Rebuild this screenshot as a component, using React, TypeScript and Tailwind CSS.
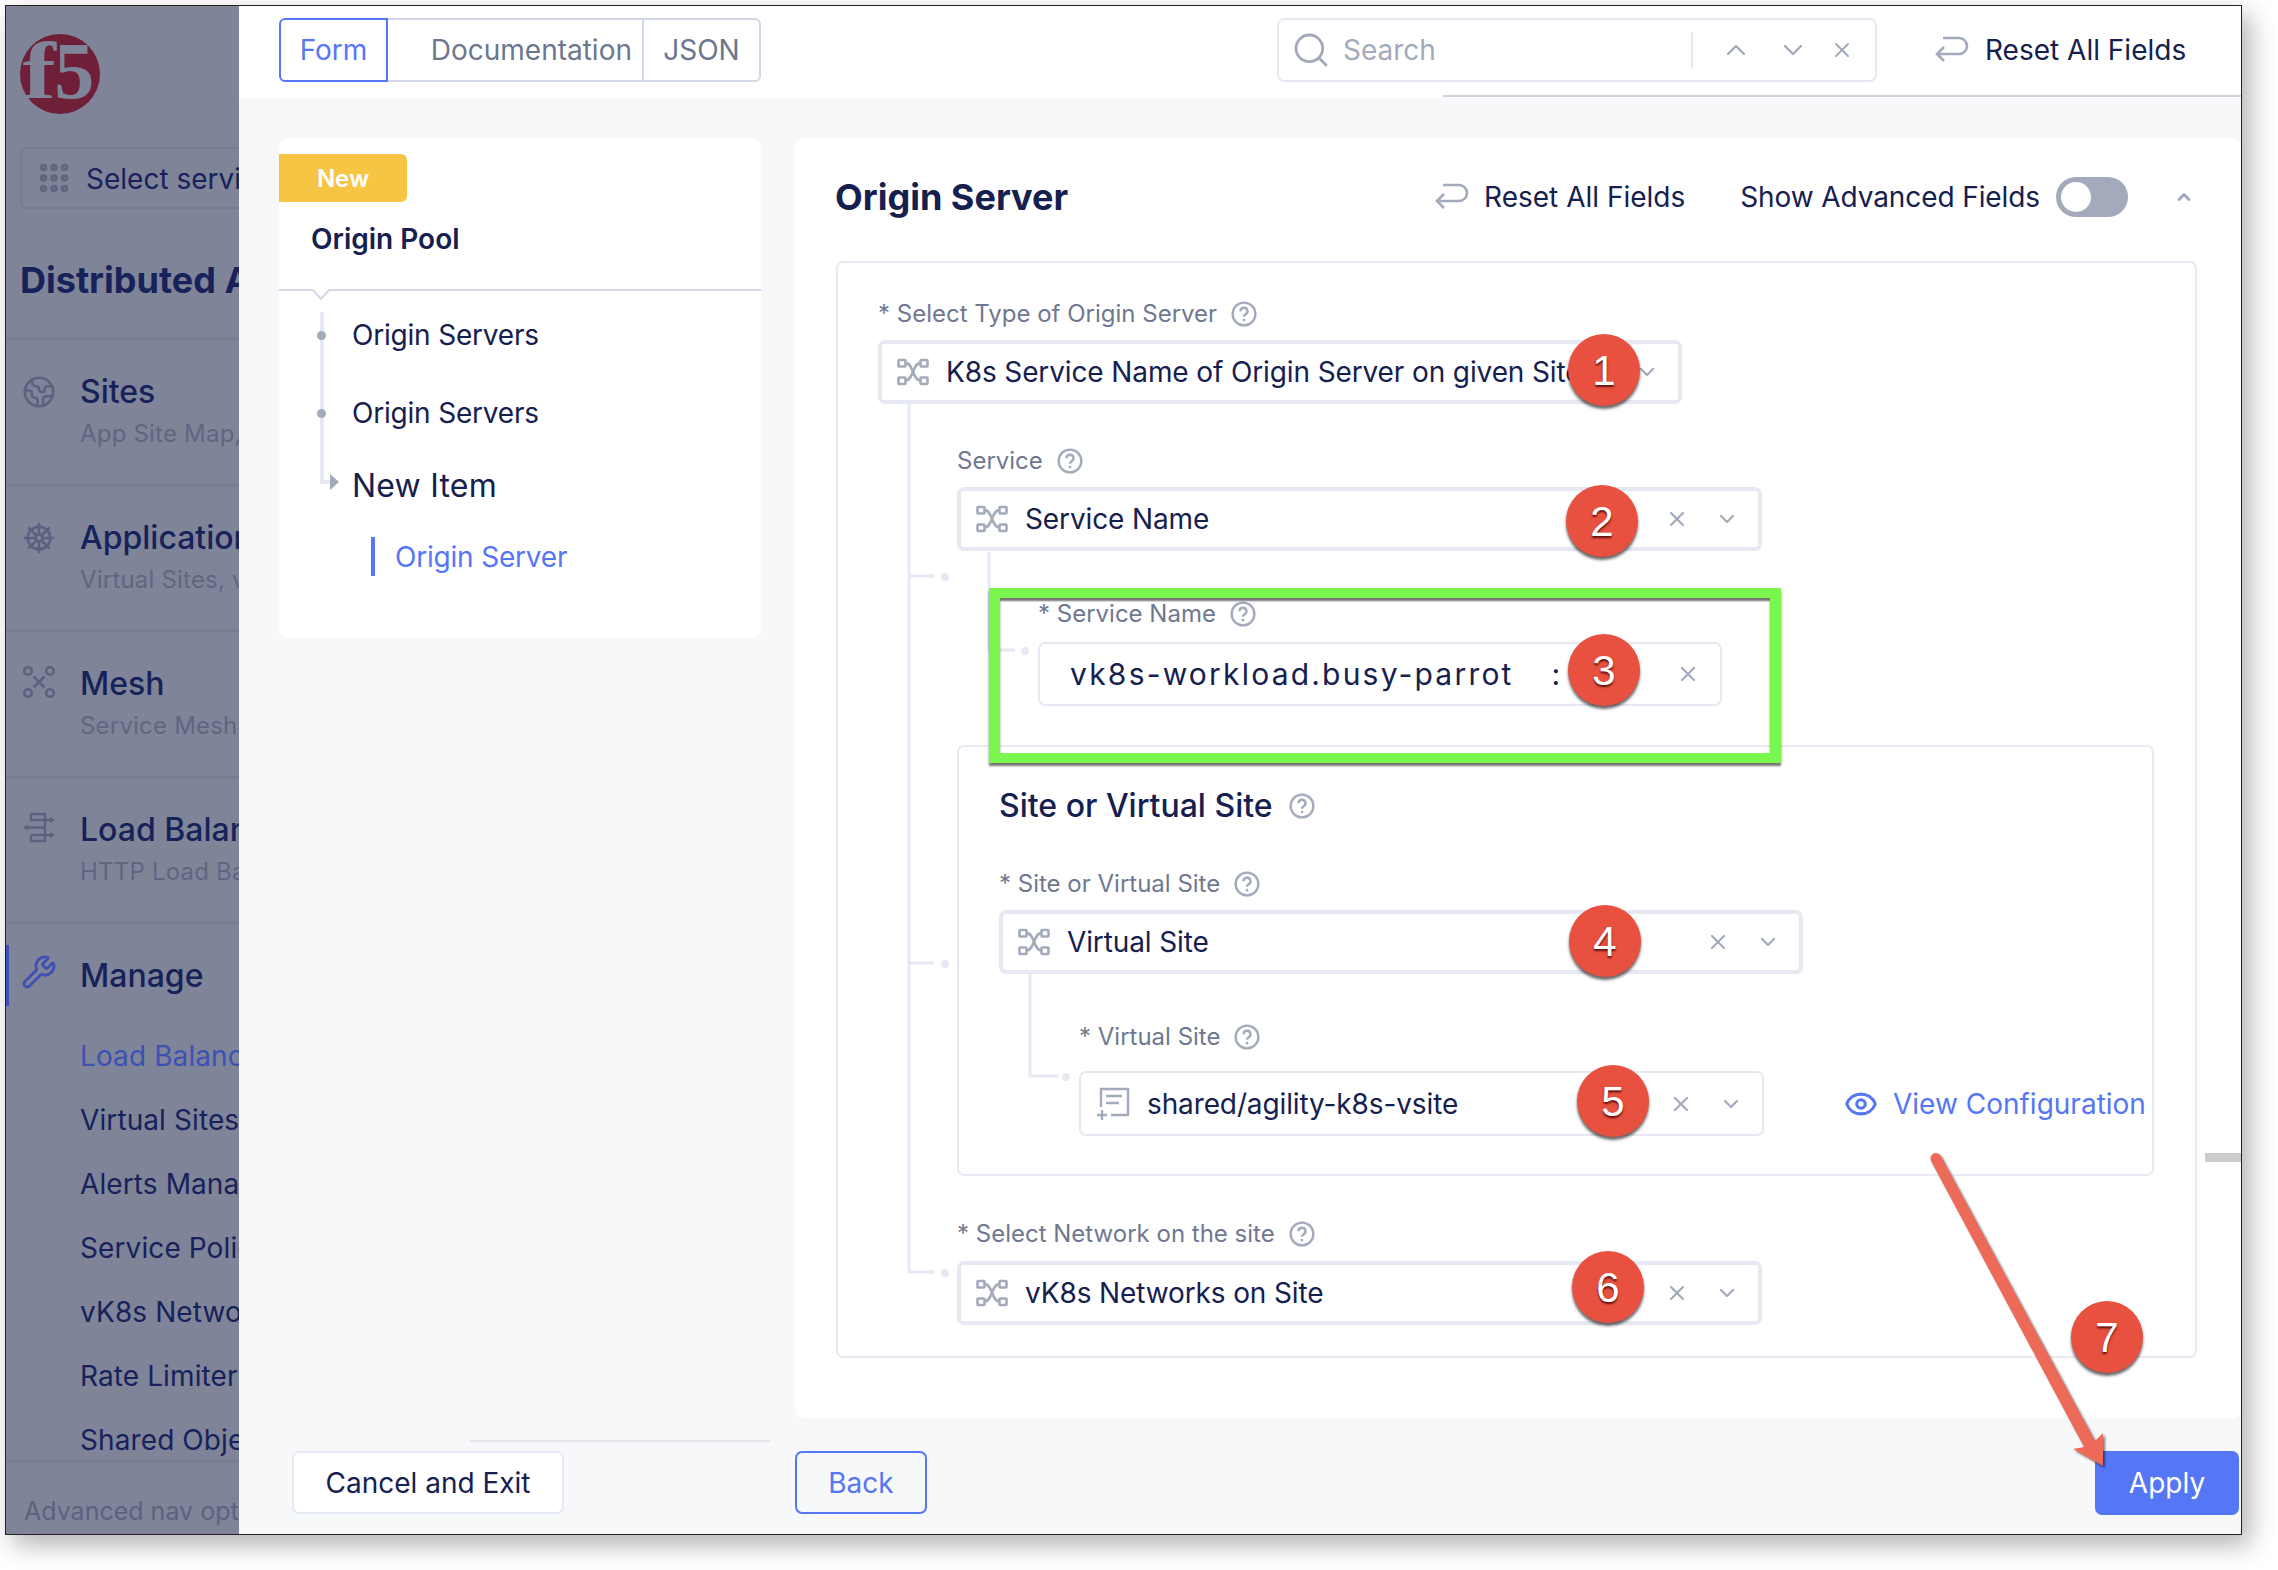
import { ChevronDown, ChevronUp, Earth, Eye, Grip, Search, ShipWheel, Wrench, X } from "lucide-react";

const NodeIcon = () => (
  <svg width="32" height="28" viewBox="0 0 32 28" fill="none" stroke="#a3aabb" strokeWidth="2.6" className="shrink-0">
    <rect x="1.5" y="2" width="7" height="6.5" rx="0.8" />
    <rect x="23.5" y="2" width="7" height="6.5" rx="0.8" />
    <rect x="1.5" y="19.5" width="7" height="6.5" rx="0.8" />
    <rect x="23.5" y="19.5" width="7" height="6.5" rx="0.8" />
    <path d="M8.5 5c8 0 7 17.500 15 17.500M8.500 22.500c8 0 7-17.500 15-17.500" />
  </svg>
);

const DocIcon = () => (
  <svg width="34" height="34" viewBox="0 0 34 34" fill="none" stroke="#a3aabb" strokeWidth="2.4" className="shrink-0">
    <path d="M5 20V2h27v26H15M10 9h16M10 16h13M6 23v10M1 28h10" />
  </svg>
);

const ResetIcon = () => (
  <svg width="34" height="28" viewBox="0 0 34 28" fill="none" stroke="#a3aabb" strokeWidth="2.6" className="shrink-0">
    <path d="M8 2H24a8 8 0 0 1 0 16H2M9 11l-7 7 7 7" />
  </svg>
);

const Help = ({ size = 26 }: { size?: number }) => (
  <svg width={size} height={size} viewBox="0 0 24 24" fill="none" className="shrink-0">
    <circle cx="12" cy="12" r="10.5" stroke="#a3aabb" strokeWidth="2.2" />
    <path d="M8.800 9.400a3.200 3.200 0 1 1 4.600 2.900c-1 .5-1.400 1.100-1.400 2.200" stroke="#a3aabb" strokeWidth="2.2" />
    <circle cx="12" cy="17.600" r="1.300" fill="#a3aabb" />
  </svg>
);

const Label = ({ text, className = "" }: { text: string; className?: string }) => (
  <div className={`h-[34px] flex items-center gap-[14px] text-[24px] text-[#6f7890] ${className}`}>
    <span>{text}</span>
    <Help />
  </div>
);

type SelectProps = {
  value: string;
  width: string;
  thin?: boolean;
  icon?: "node" | "doc" | "none";
  clear?: boolean;
  chevron?: boolean;
};

const Select = ({ value, width, thin, icon = "node", clear = true, chevron = true }: SelectProps) => (
  <div
    className={`${width} ${thin ? "h-[65px] border-2" : "h-[64px] border-4"} box-border shrink-0 border-[#e6e9f3] rounded-[7px] bg-white flex items-center pl-[15px] pr-[19px]`}
  >
    {icon === "node" && <NodeIcon />}
    {icon === "doc" && <DocIcon />}
    <span className="ml-[17px] text-[28px] tracking-[-0.12px] text-[#16204f] whitespace-nowrap overflow-hidden">{value}</span>
    <div className="ml-auto flex items-center gap-[26px] text-[#a3aabb]">
      {clear && <X size={24} strokeWidth={2.2} />}
      {chevron && <ChevronDown size={24} strokeWidth={2.2} />}
    </div>
  </div>
);

const navMain = [
  { title: "Sites", sub: "App Site Map, Sites", icon: <Earth size={36} strokeWidth={1.8} /> },
  { title: "Applications", sub: "Virtual Sites, vK8s", icon: <ShipWheel size={36} strokeWidth={1.8} /> },
  {
    title: "Mesh",
    sub: "Service Mesh",
    icon: (
      <svg width="32" height="32" viewBox="0 0 32 32" fill="none" stroke="currentColor" strokeWidth="2.600">
        <circle cx="5" cy="5" r="3.800" />
        <circle cx="27" cy="5" r="3.800" />
        <circle cx="5" cy="27" r="3.800" />
        <circle cx="27" cy="27" r="3.800" />
        <path d="M10.500 10.500l11 11M21.500 10.500l-11 11" />
      </svg>
    ),
  },
  {
    title: "Load Balancers",
    sub: "HTTP Load Balancers",
    icon: (
      <svg width="34" height="32" viewBox="0 0 34 32" fill="none" stroke="currentColor" strokeWidth="2.400">
        <path d="M24 2H9v6h20M6 15.500h18M9 23h20M9 23v6h15M23 2v27" />
        <path d="M33 8l-5-3v6zM1 15.500l5-3v6zM33 23l-5-3v6z" fill="currentColor" stroke="none" />
      </svg>
    ),
  },
];

const navSub = ["Load Balancers", "Virtual Sites", "Alerts Management", "Service Policies", "vK8s Networks", "Rate Limiter", "Shared Objects"];

const Sidebar = () => (
  <aside className="w-[233px] shrink-0 h-full bg-[#7f8499] overflow-hidden relative text-[#17225a]">
    <div className="h-[141px] relative">
      <div className="absolute left-[14px] top-[28px] w-[80px] h-[80px] rounded-full bg-[#6f1f38] flex items-center justify-center">
        <span className="font-['Liberation_Serif',serif] font-bold text-[#7f8499] text-[80px] leading-none tracking-[-1px] -mt-[6px] pl-[2px]">
          <span className="inline-block scale-x-125 origin-right">f</span>5
        </span>
      </div>
    </div>
    <div className="ml-[14px] w-[300px] h-[62px] box-border border-2 border-[#777c93] rounded-[7px] flex items-center pl-[14px] gap-[14px] whitespace-nowrap">
      <Grip size={36} className="text-[#5f667f]" strokeWidth={3} />
      <span className="text-[28px] mt-[2px]">Select service</span>
    </div>
    <div className="ml-[14px] h-[129px] pt-[49px] text-[36px] leading-[44px] font-bold whitespace-nowrap">Distributed Apps</div>
    {navMain.map((item) => (
      <div key={item.title} className="h-[146px] border-t-2 border-[#777c93] pl-[16px] pt-[30px] flex gap-[24px] whitespace-nowrap">
        <div className="w-[34px] shrink-0 flex justify-center text-[#5a6280] pt-[4px]">{item.icon}</div>
        <div>
          <div className="text-[32px] leading-[44px] font-medium">{item.title}</div>
          <div className="text-[24px] leading-[36px] mt-[2px] tracking-[0.2px] text-[#5f6682]">{item.sub}</div>
        </div>
      </div>
    ))}
    <div className="border-t-2 border-[#777c93] relative">
      <div className="absolute left-0 top-[21px] w-[3px] h-[61px] bg-[#3d51b4]" />
      <div className="h-[100px] pl-[16px] pt-[30px] flex gap-[24px] whitespace-nowrap">
        <div className="w-[34px] shrink-0 flex justify-center">
          <Wrench size={36} className="text-[#3d51b4] shrink-0" strokeWidth={1.9} />
        </div>
        <span className="text-[32px] leading-[44px] font-medium">Manage</span>
      </div>
      <div className="pl-[74px] whitespace-nowrap">
        {navSub.map((s, i) => (
          <div key={s} className={`h-[64px] flex items-center text-[28px] tracking-[0.1px] ${i === 0 ? "text-[#3d51b4]" : ""}`}>{s}</div>
        ))}
      </div>
    </div>
    <div className="absolute left-0 right-0 bottom-0 h-[74px] bg-[#7f8499] border-t-2 border-[#777c93] pl-[18px] pt-[31px] text-[25px] leading-[36px] text-[#5a6280] whitespace-nowrap">
      Advanced nav options
    </div>
  </aside>
);

const TopBar = () => (
  <div className="h-[92px] shrink-0 bg-white flex pl-[40px] pr-[50px] pt-[12px]">
    <div className="flex h-[64px] text-[28px] text-[#6c7690]">
      <div className="w-[109px] box-border border-2 border-[#5677f5] rounded-l-[6px] text-[#5677f5] flex items-center justify-center">Form</div>
      <div className="w-[254px] box-border border-y-2 border-[#d3d8e8] flex items-center justify-end pr-[10px]">Documentation</div>
      <div className="w-[119px] box-border border-2 border-[#d3d8e8] rounded-r-[6px] flex items-center justify-center">JSON</div>
    </div>
    <div className="ml-[516px] w-[600px] h-[64px] box-border border-2 border-[#e6e9f3] rounded-[7px] flex items-center pl-[12px] text-[#a3aabb]">
      <Search size={40} strokeWidth={1.7} />
      <span className="ml-[12px] text-[28px]">Search</span>
      <div className="ml-auto h-[36px] border-l-2 border-[#e6e9f3] pl-[27px] pr-[21px] flex items-center gap-[25px]">
        <ChevronUp size={32} strokeWidth={1.8} />
        <ChevronDown size={32} strokeWidth={1.8} />
        <X size={24} strokeWidth={2} className="-ml-[4px]" />
      </div>
    </div>
    <div className="ml-[58px] h-[64px] flex items-center gap-[16px] text-[28px] text-[#16204f] whitespace-nowrap">
      <ResetIcon />
      <span>Reset All Fields</span>
    </div>
  </div>
);

const TreeDot = () => <span className="absolute -left-[35px] w-[9px] h-[9px] rounded-full bg-[#a3aabb]" />;

const LeftCol = () => (
  <div className="w-[482px] shrink-0 h-full flex flex-col">
    <div className="mt-[41px] h-[499px] bg-white rounded-[8px] pt-[15px] relative">
      <div className="w-[128px] h-[48px] bg-[#f7c544] rounded-r-[6px] text-white text-[24px] font-semibold flex items-center justify-center pt-[2px]">New</div>
      <div className="ml-[32px] mt-[17px] h-[40px] text-[28px] leading-[40px] font-semibold text-[#16204f]">Origin Pool</div>
      <div className="mt-[30px] h-[2px] bg-[#d3d8e8] relative">
        <svg width="20" height="12" viewBox="0 0 20 12" className="absolute left-[32px] top-0">
          <path d="M1 0l9 10 9-10" fill="#fff" stroke="#d3d8e8" strokeWidth="2" />
        </svg>
      </div>
      <div className="absolute left-[41px] top-[173px] w-[4px] h-[171px] bg-[#e6e9f3]" />
      <div className="absolute left-[41px] top-[341px] w-[10px] h-[4px] bg-[#e6e9f3]" />
      <div className="absolute left-[51px] top-[335px] w-0 h-0 border-y-[8px] border-y-transparent border-l-[9px] border-l-[#a3aabb]" />
      <div className="ml-[73px] mt-[24px] text-[#16204f] whitespace-nowrap">
        <div className="relative h-[40px] flex items-center text-[28px] tracking-[-0.2px]">
          <TreeDot />
          Origin Servers
        </div>
        <div className="relative mt-[38px] h-[40px] flex items-center text-[28px] tracking-[-0.2px]">
          <TreeDot />
          Origin Servers
        </div>
        <div className="mt-[33px] h-[40px] flex items-center text-[32px] tracking-[0.2px]">New Item</div>
        <div className="ml-[19px] mt-[31px] h-[39px] border-l-4 border-[#5677f5] pl-[20px] flex items-center text-[28px] tracking-[-0.2px] text-[#5677f5]">Origin Server</div>
      </div>
    </div>
    <div className="ml-[13px] mt-auto mb-[20px] w-[272px] h-[63px] box-border border-2 border-[#e6e9f3] rounded-[7px] bg-white flex items-center justify-center text-[28px] text-[#16204f]">
      Cancel and Exit
    </div>
  </div>
);

const OriginForm = () => (
  <div className="ml-[41px] w-[1361px] h-[1097px] box-border border-2 border-[#e8eaf3] rounded-[7px] pl-[40px] pt-[34px]">
    <Label text="* Select Type of Origin Server" />
    <div className="mt-[9px]">
      <Select value="K8s Service Name of Origin Server on given Site" width="w-[804px]" clear={false} />
    </div>
    <div className="ml-[79px] mt-[40px]">
      <Label text="Service" />
      <div className="mt-[9px]">
        <Select value="Service Name" width="w-[805px]" />
      </div>
      <div className="ml-[81px] mt-[46px]">
        <Label text="* Service Name" />
        <div className="mt-[11px] w-[684px] h-[64px] box-border border-2 border-[#e6e9f3] rounded-[7px] flex items-center pl-[30px] pr-[20px] text-[30px] tracking-[2.2px] text-[#16204f] whitespace-nowrap">
          <span>vk8s-workload.busy-parrot</span>
          <span className="ml-[38px]">:</span>
          <X size={24} strokeWidth={2.2} className="ml-auto text-[#a3aabb]" />
        </div>
      </div>
      <div className="mt-[39px] w-[1197px] h-[431px] box-border border-2 border-[#e8eaf3] rounded-[7px] pl-[40px] pt-[39px]">
        <div className="h-[40px] flex items-center gap-[16px] text-[32px] font-medium text-[#16204f]">
          <span>Site or Virtual Site</span>
          <Help />
        </div>
        <Label text="* Site or Virtual Site" className="mt-[41px]" />
        <div className="mt-[9px]">
          <Select value="Virtual Site" width="w-[804px]" />
        </div>
        <div className="ml-[80px] mt-[46px]">
          <Label text="* Virtual Site" />
          <div className="mt-[17px] flex items-center">
            <Select value="shared/agility-k8s-vsite" width="w-[685px]" thin icon="doc" />
            <div className="ml-[80px] flex items-center gap-[15px] text-[28px] text-[#5677f5] whitespace-nowrap">
              <Eye size={34} strokeWidth={2.2} />
              <span>View Configuration</span>
            </div>
          </div>
        </div>
      </div>
      <Label text="* Select Network on the site" className="mt-[41px]" />
      <div className="mt-[10px]">
        <Select value="vK8s Networks on Site" width="w-[805px]" />
      </div>
    </div>
  </div>
);

const RightCol = () => (
  <div className="ml-[34px] flex-1 h-full flex flex-col">
    <div className="mt-[41px] h-[1279px] bg-white rounded-[8px]">
      <div className="h-[122px] pl-[40px] pr-[47px] pb-[6px] flex items-center">
        <span className="text-[36px] font-bold text-[#16204f]">Origin Server</span>
        <div className="ml-auto flex items-center text-[28px] text-[#16204f] whitespace-nowrap">
          <ResetIcon />
          <span className="ml-[15px]">Reset All Fields</span>
          <span className="ml-[55px] tracking-[-0.1px]">Show Advanced Fields</span>
          <div className="ml-[16px] w-[72px] h-[40px] rounded-full bg-[#a3aabb] p-[5px]">
            <div className="w-[30px] h-[30px] rounded-full bg-white" />
          </div>
          <ChevronUp size={20} strokeWidth={3.5} className="ml-[46px] text-[#a3aabb]" />
        </div>
      </div>
      <OriginForm />
    </div>
    <div className="mt-[33px] flex items-start justify-between pr-[2px] text-[28px]">
      <div className="w-[132px] h-[63px] box-border border-2 border-[#5677f5] rounded-[7px] text-[#5677f5] flex items-center justify-center">Back</div>
      <div className="w-[144px] h-[64px] rounded-[7px] bg-[#5677f5] text-white flex items-center justify-center">Apply</div>
    </div>
  </div>
);

const badges = [
  { n: 1, pos: "left-[1568px] top-[334px]" },
  { n: 2, pos: "left-[1566px] top-[485px]" },
  { n: 3, pos: "left-[1568px] top-[634px]" },
  { n: 4, pos: "left-[1569px] top-[905px]" },
  { n: 5, pos: "left-[1577px] top-[1065px]" },
  { n: 6, pos: "left-[1572px] top-[1251px]" },
  { n: 7, pos: "left-[2071px] top-[1301px]" },
];

const Annotations = () => (
  <>
    <svg width="2278" height="1570" className="absolute left-0 top-0 pointer-events-none">
      <g stroke="#e6e9f3" strokeWidth="3" fill="none">
        <path d="M909 404V1272H934M909 576H934M909 963H934" />
        <path d="M989 552V650H1015" />
        <path d="M1030 974V1076H1058" />
      </g>
      <g fill="#e6e9f3">
        <circle cx="945" cy="577" r="4" />
        <circle cx="945" cy="964" r="4" />
        <circle cx="945" cy="1273" r="4" />
        <circle cx="1025" cy="651" r="4" />
        <circle cx="1066" cy="1077" r="4" />
      </g>
      <path d="M1443 96H2241" stroke="#cfd2d8" strokeWidth="2" />
      <path d="M470 1441H770" stroke="#cfd2d8" strokeWidth="1" />
      <rect x="2205" y="1153" width="36" height="9" fill="#cccccc" />
      <path
        d="M1931 1161a5.500 5.500 0 0 1 9.500-5.500L2095 1441L2103 1433V1466L2073 1449L2084 1447Z"
        fill="#ee6a58"
        className="[filter:drop-shadow(2px_2px_1px_rgba(0,0,0,0.5))]"
      />
    </svg>
    <div className="absolute left-[989px] top-[588px] w-[792px] h-[175px] box-border border-x-[11px] border-y-[10px] border-[#7af74f] shadow-[0_3px_2px_rgba(0,0,0,0.55),inset_0_3px_2px_rgba(0,0,0,0.55)]" />
    {badges.map((b) => (
      <div
        key={b.n}
        className={`absolute ${b.pos} w-[72px] h-[72px] rounded-full bg-[#e8503f] shadow-[0_3px_3px_rgba(0,0,0,0.6)] flex items-center justify-center text-white text-[42px] font-['Liberation_Sans',sans-serif] [text-shadow:0_2px_2px_rgba(60,0,0,0.8)]`}
      >
        {b.n}
      </div>
    ))}
  </>
);

export default function App() {
  return (
    <div className="relative w-[2278px] h-[1570px] bg-white overflow-hidden pl-[5px] pt-[5px] font-[Inter,sans-serif]">
      <div className="w-[2237px] h-[1530px] box-border border border-[#222222] flex shadow-[8px_10px_24px_rgba(0,0,0,0.3)]">
        <Sidebar />
        <main className="flex-1 h-full flex flex-col">
          <TopBar />
          <div className="flex-1 min-h-0 bg-[#f7f8fa] flex pl-[40px]">
            <LeftCol />
            <RightCol />
          </div>
        </main>
      </div>
      <Annotations />
    </div>
  );
}
